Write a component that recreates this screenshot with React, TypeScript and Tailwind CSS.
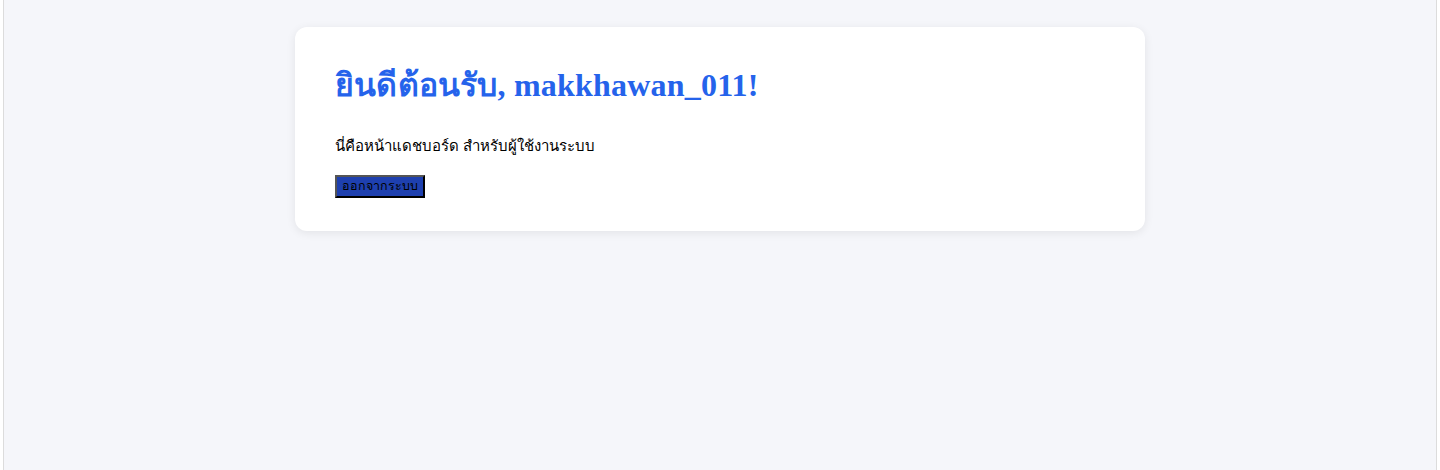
import React from 'react';

const Dashboard: React.FC = () => {
  return (
    <div className="min-h-[470px] bg-white px-[3px]">
      <div className="min-h-[470px] border-x border-[#dcdcdc] bg-[#f5f6fa] pt-[27px]">
        <div className="mx-auto w-[850px] rounded-xl bg-white px-10 pt-10 pb-[33px] shadow-[0_2px_10px_rgba(0,0,0,0.08)]">
          <h1 className="font-['Liberation_Serif',serif] text-[32px] leading-[37px] font-bold tracking-[0.2px] text-[#2563eb]">
            ยินดีต้อนรับ, makkhawan_011!
          </h1>
          <p className="mt-[32px] font-['Liberation_Serif',serif] text-[15px] leading-5 text-black">
            นี่คือหน้าแดชบอร์ด สำหรับผู้ใช้งานระบบ
          </p>
          <button className="mt-[19px] block h-[23px] w-[90px] border-2 border-t-[#555] border-l-[#555] border-r-black border-b-black bg-[#1e40af] px-[4px] font-['Liberation_Sans',sans-serif] text-[12.5px] leading-none text-black">
            ออกจากระบบ
          </button>
        </div>
      </div>
    </div>
  );
};

export default function App() {
  return <Dashboard />;
}
